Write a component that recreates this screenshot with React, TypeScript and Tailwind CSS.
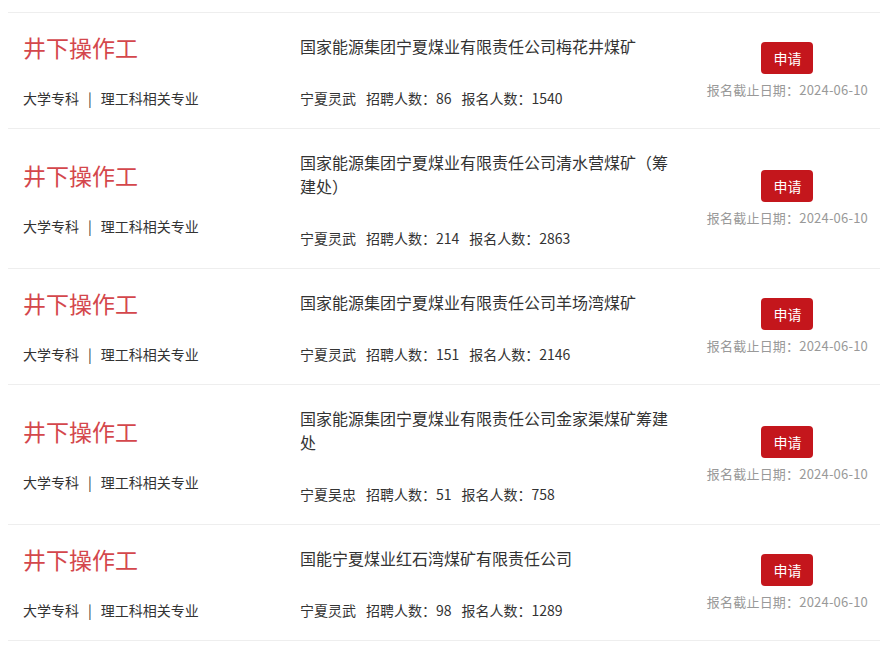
const jobs = [
  { company: '国家能源集团宁夏煤业有限责任公司梅花井煤矿', place: '宁夏灵武', hire: 86, apply: 1540 },
  { company: '国家能源集团宁夏煤业有限责任公司清水营煤矿（筹建处）', place: '宁夏灵武', hire: 214, apply: 2863 },
  { company: '国家能源集团宁夏煤业有限责任公司羊场湾煤矿', place: '宁夏灵武', hire: 151, apply: 2146 },
  { company: '国家能源集团宁夏煤业有限责任公司金家渠煤矿筹建处', place: '宁夏吴忠', hire: 51, apply: 758 },
  { company: '国能宁夏煤业红石湾煤矿有限责任公司', place: '宁夏灵武', hire: 98, apply: 1289 },
]

export default function App() {
  return (
    <div
      className="bg-white min-h-screen pt-3 px-2"
      style={{ fontFamily: '"Microsoft YaHei", "Noto Sans CJK SC", "Noto Sans", sans-serif' }}
    >
      <ul className="w-[872px]">
        {jobs.map((job, i) => (
          <li
            key={i}
            className="flex items-center border-t border-[#eeeeee] last:border-b pl-[15px] pr-[12px] py-[20px]"
          >
            {/* left: title + requirements */}
            <div className="w-[277px] shrink-0 flex flex-col">
              <div className="text-[23px] leading-[28px] text-[#d4474c]">井下操作工</div>
              <div className="mt-[27px] text-[14px] leading-[20px] text-[#333]">
                大学专科<span className="mx-[9px]">|</span>理工科相关专业
              </div>
            </div>

            {/* middle: company + info */}
            <div className="w-[380px] shrink-0 self-start flex flex-col">
              <div className="text-[16px] leading-[24px] text-[#333] pt-[1px]">{job.company}</div>
              <div className="mt-[30px] text-[14px] leading-[20px] text-[#333]">
                <span className="mr-[10px]">{job.place}</span>
                <span className="mr-[10px]">招聘人数：{job.hire}</span>
                <span>报名人数：{job.apply}</span>
              </div>
            </div>

            {/* right: apply button + deadline */}
            <div className="flex-1 flex flex-col items-end">
              <div className="flex flex-col items-center">
                <button className="w-[52px] h-[32px] rounded-[4px] bg-[#c4161c] text-white text-[14px]">
                  申请
                </button>
                <div className="mt-[7px] text-[13px] leading-[18px] tracking-[0.2px] text-[#999]">
                  报名截止日期：2024-06-10
                </div>
              </div>
            </div>
          </li>
        ))}
      </ul>
    </div>
  )
}
